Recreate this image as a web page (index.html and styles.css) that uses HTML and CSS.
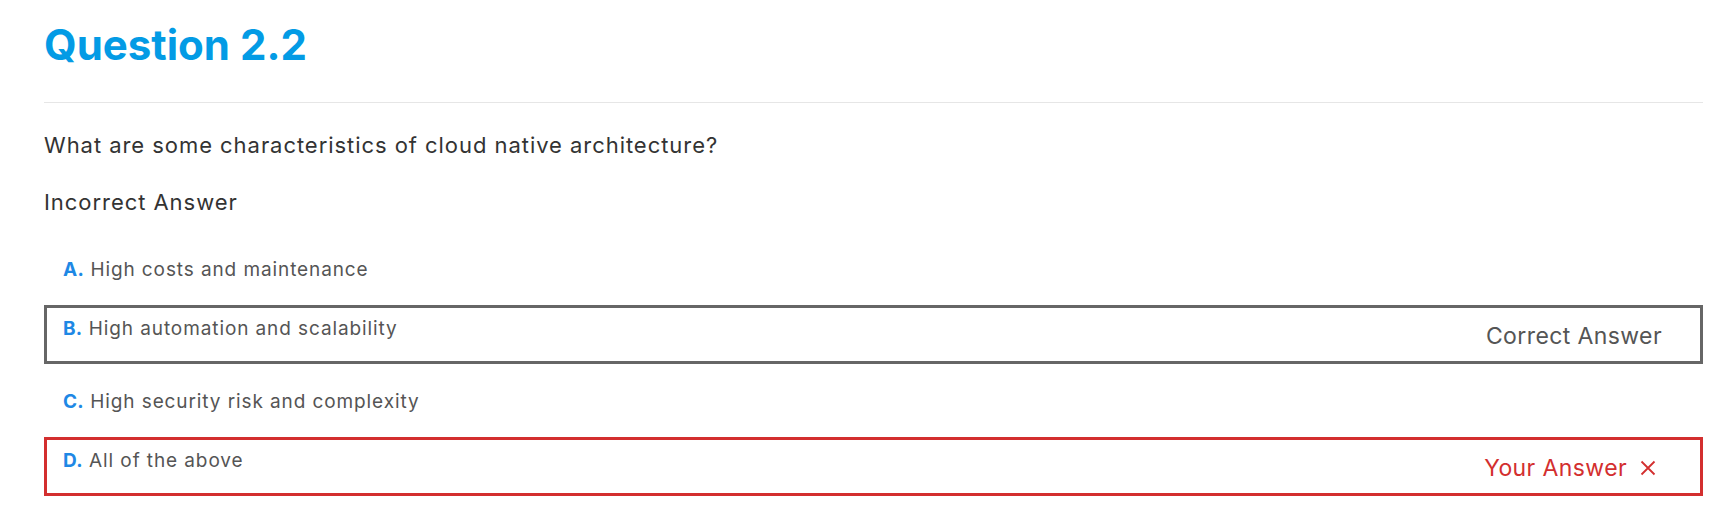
FILE: index.html
```html
<!DOCTYPE html>
<html lang="en">
<head>
<meta charset="utf-8">
<title>Question 2.2</title>
<link rel="stylesheet" href="styles.css">
</head>
<body>
<main class="page">
  <h1 class="title">Question 2.2</h1>
  <hr class="divider">
  <p class="question">What are some characteristics of cloud native architecture?</p>
  <p class="result">Incorrect Answer</p>
  <ul class="options">
    <li class="option">
      <span class="option-text"><b class="letter">A.</b> High costs and maintenance</span>
    </li>
    <li class="option option--correct">
      <span class="option-text"><b class="letter">B.</b> High automation and scalability</span>
      <span class="option-label">Correct Answer</span>
    </li>
    <li class="option">
      <span class="option-text"><b class="letter">C.</b> High security risk and complexity</span>
    </li>
    <li class="option option--wrong">
      <span class="option-text"><b class="letter">D.</b> All of the above</span>
      <span class="option-label option-label--wrong">Your Answer
        <svg class="x-icon" width="16" height="16" viewBox="0 0 16 16" aria-hidden="true"><path d="M1.5 1.5 L14.5 14.5 M14.5 1.5 L1.5 14.5" stroke="#d32f2f" stroke-width="1.8" fill="none"/></svg>
      </span>
    </li>
  </ul>
</main>
</body>
</html>
```

FILE: styles.css
```css
* { box-sizing: border-box; }

html, body {
  margin: 0;
  padding: 0;
  background: #ffffff;
}

body {
  font-family: Inter, "Noto Sans", "Liberation Sans", sans-serif;
  color: #333333;
}

.page {
  padding: 20px 30px 0 44px;
}

.title {
  margin: 0;
  font-size: 42px;
  line-height: 1.2;
  font-weight: 700;
  color: #039be5;
}

.divider {
  margin: 32px 0 0 0;
  border: 0;
  border-top: 1px solid #e6e6e6;
  height: 0;
}

.question {
  margin: 27px 0 0 0;
  font-size: 22px;
  line-height: 30px;
  letter-spacing: 0.95px;
  color: #333333;
}

.result {
  margin: 27px 0 0 0;
  font-size: 22px;
  line-height: 30px;
  letter-spacing: 0.95px;
  color: #333333;
}

.options {
  list-style: none;
  margin: 29px 0 0 0;
  padding: 0;
}

.option {
  display: flex;
  justify-content: space-between;
  align-items: flex-start;
  min-height: 59px;
  padding: 7px 38px 4px 16px;
  border: 3px solid transparent;
  font-size: 19px;
  line-height: 27px;
  letter-spacing: 0.9px;
  color: #555555;
}

.option--correct {
  border-color: #666666;
  margin-bottom: 14px;
}

.option--wrong {
  border-color: #d32f2f;
  padding-right: 44px;
}

.letter {
  color: #1e88e5;
  font-weight: 700;
  letter-spacing: 0.3px;
}

.option-label {
  align-self: center;
  display: flex;
  align-items: center;
  gap: 13px;
  font-size: 23px;
  line-height: 30px;
  letter-spacing: 0.4px;
  color: #555555;
}

.option-label--wrong {
  color: #d32f2f;
}

.x-icon {
  display: block;
}
```
